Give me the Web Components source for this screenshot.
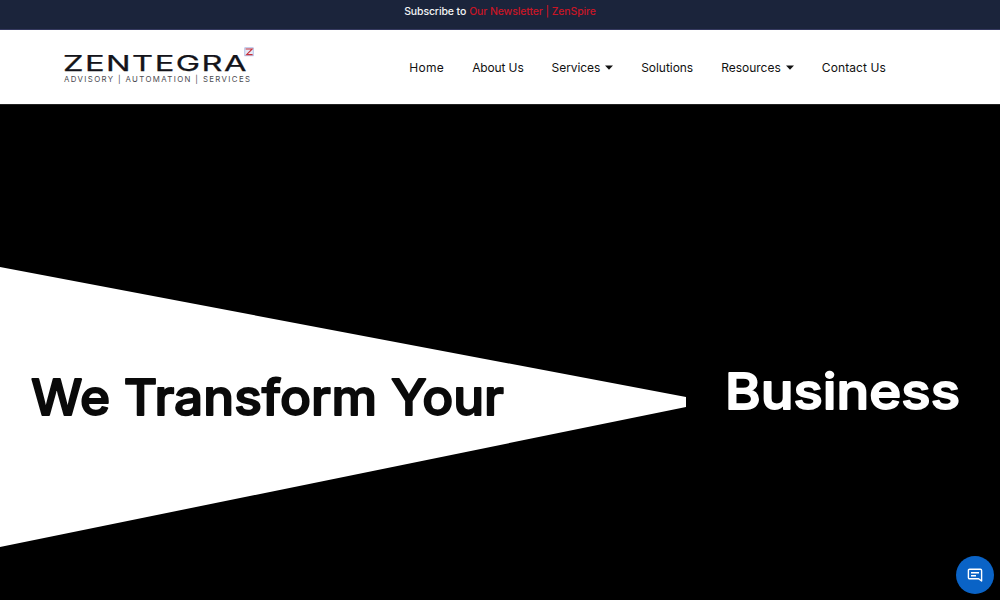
<!DOCTYPE html>
<html><head><meta charset="utf-8">
<style>
html,body{margin:0;padding:0;height:100%;overflow:hidden;background:#000}
body{display:flex;flex-direction:column;height:600px;position:relative;font-family:"Inter","Liberation Sans",sans-serif}
</style></head>
<body>
<promo-bar></promo-bar>
<site-header></site-header>
<hero-banner></hero-banner>
<chat-button></chat-button>
<script>
function def(name,html){customElements.define(name,class extends HTMLElement{constructor(){super();this.attachShadow({mode:"open"}).innerHTML=html}})}
def("promo-bar",`<style>
:host{display:flex;justify-content:center;align-items:center;box-sizing:content-box;height:25px;padding-bottom:4px;background:#1b243b;border-bottom:1px solid #35395f;font:500 10.5px/1 Inter,"Liberation Sans",sans-serif;color:#f4f4f6;letter-spacing:-.12px}
b{font-weight:500;color:#c81626;margin-left:3px}
</style><span>Subscribe to</span><b>Our Newsletter | ZenSpire</b>`);
def("site-logo",`<style>:host{display:block;width:192px;height:42px;margin-top:-1px}svg{display:block;overflow:visible}</style>
<svg width="192" height="42" viewBox="0 0 192 42">
<text x="0" y="25" font-family="Inter,Liberation Sans,sans-serif" font-size="22" font-weight="400" letter-spacing="1" stroke="#14141a" stroke-width=".25" fill="#14141a" textLength="185" lengthAdjust="spacingAndGlyphs">ZENTEGRA</text>
<text x="1" y="36.4" font-family="Inter,Liberation Sans,sans-serif" font-size="7.8" font-weight="400" fill="#4a4a50" textLength="186" lengthAdjust="spacing">ADVISORY | AUTOMATION | SERVICES</text>
<rect x="181.8" y="1.8" width="8.4" height="8" fill="#e6eaf6" stroke="#9aaade" stroke-width=".7"/>
<path d="M182.6 3h6.6l-5.6 5.6h6" fill="none" stroke="#c8303a" stroke-width="1.1"/>
</svg>`);
def("nav-item",`<style>:host{display:inline-flex;align-items:center;gap:5px;font:400 12px/1 Inter,"Liberation Sans",sans-serif;letter-spacing:.05px;color:#111;white-space:nowrap}
svg{display:none}:host([caret]) svg{display:block}</style><slot></slot><svg width="8" height="5" viewBox="0 0 8 5"><path d="M0 .5h8L4 4.8z" fill="#111"/></svg>`);
def("site-header",`<style>
:host{display:flex;align-items:center;justify-content:space-between;height:74px;background:#fff;padding:0 114px 0 63px}
nav{display:flex;gap:28px;align-items:center;margin-top:1px}
</style><site-logo></site-logo><nav>
<nav-item style="letter-spacing:.3px">Home</nav-item><nav-item style="letter-spacing:-.13px">About Us</nav-item><nav-item caret style="letter-spacing:-.08px">Services</nav-item><nav-item style="letter-spacing:-.05px">Solutions</nav-item><nav-item caret style="letter-spacing:0">Resources</nav-item><nav-item style="letter-spacing:.1px">Contact Us</nav-item></nav>`);
def("hero-banner",`<style>
:host{display:flex;flex:1;background:#000;border-top:1px solid #222}
.wedge{width:686px;height:495px;background:#fff;clip-path:polygon(0 162px,686px 292px,686px 302px,0 442px);display:flex;align-items:flex-start;padding:261px 0 0 32px;box-sizing:border-box;flex:none}
.next{padding:255px 0 0 41px}
svg{display:block;overflow:visible}
text{font-family:Inter,"Liberation Sans",sans-serif;font-size:50px;font-weight:500;stroke-width:1.8px;stroke-linejoin:round;stroke-linecap:round}
.d{fill:#0a0a0a;stroke:#0a0a0a}.l{fill:#fff;stroke:#fff}
</style><div class="wedge"><svg width="475" height="60"><text class="d" x="-1" y="49.2" textLength="473" lengthAdjust="spacingAndGlyphs">We Transform Your</text></svg></div><div class="next"><svg width="235" height="60"><text class="l" x="-2" y="49" textLength="235" lengthAdjust="spacingAndGlyphs">Business</text></svg></div>`);
def("chat-button",`<style>
:host{position:absolute;left:956px;top:556px;width:38px;height:38px;border-radius:50%;background:#0a63c6;display:flex;align-items:center;justify-content:center}
</style><svg width="16" height="16" viewBox="0 0 16 16" fill="none" stroke="#fff" stroke-width="1.4"><path d="M2.6 2.2h10.8a1.2 1.2 0 0 1 1.2 1.2v10.6l-3-2.2H2.6a1.2 1.2 0 0 1-1.2-1.2V3.4a1.2 1.2 0 0 1 1.2-1.2z" stroke-linejoin="round"/><path d="M4 5.8h8M4 8.8h5"/></svg>`);
</script>
</body></html>
